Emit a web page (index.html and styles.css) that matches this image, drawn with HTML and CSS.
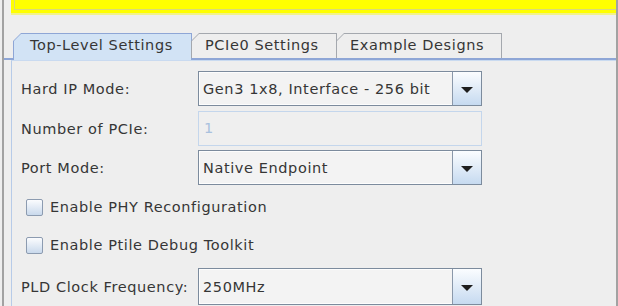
FILE: index.html
```html
<html>
<head>
    <link rel="stylesheet" href="styles.css">
</head>
<body>
    <div class="window">
        <div class="banner"><div class="bannerInner"></div></div>

        <div class="tabs">
            <div class="tab tabSelected" style="width:179px"><div class="tabFace">Top-Level Settings</div></div>
            <div class="tab" style="width:146px"><div class="tabFace">PCIe0 Settings</div></div>
            <div class="tab" style="width:166px"><div class="tabFace">Example Designs</div></div>
        </div>

        <div class="panel">
            <div class="row rowFirst">
                <span class="label">Hard IP Mode:</span>
                <div class="combo">
                    <span class="comboValue">Gen3 1x8, Interface - 256 bit</span>
                    <span class="comboArrow"><span class="triangle"></span></span>
                </div>
            </div>
            <div class="row rowField">
                <span class="label">Number of PCIe:</span>
                <div class="field disabled">1</div>
            </div>
            <div class="row rowPort">
                <span class="label">Port Mode:</span>
                <div class="combo">
                    <span class="comboValue">Native Endpoint</span>
                    <span class="comboArrow"><span class="triangle"></span></span>
                </div>
            </div>
            <div class="check checkFirst">
                <span class="box"></span>
                <span>Enable PHY Reconfiguration</span>
            </div>
            <div class="check checkSecond">
                <span class="box"></span>
                <span>Enable Ptile Debug Toolkit</span>
            </div>
            <div class="row rowClock">
                <span class="label">PLD Clock Frequency:</span>
                <div class="combo comboTall">
                    <span class="comboValue">250MHz</span>
                    <span class="comboArrow"><span class="triangle"></span></span>
                </div>
            </div>
        </div>
    </div>
</body>
</html>
```

FILE: styles.css
```css
body {
    margin: 0;
    background-color: #eeeeee;
    font-family: "DejaVu Sans", sans-serif;
    font-size: 14.5px;
    letter-spacing: 0.6px;
    color: #363636;
    overflow: hidden;
}

.window {
    margin-left: 2px;
    width: 612px;
    height: 306px;
    border-left: 2px solid #a2a2a2;
    border-right: 2px solid #a2a2a2;
}

/* yellow message strip, cut off by the top of the picture */
.banner {
    margin-left: 7px;
    height: 13px;
    background-color: #ffff00;
    border-bottom: 2px solid #f2f28a;
}

    .bannerInner {
        margin-left: 3px;
        height: 9px;
        border-left: 1px solid #d9d97a;
        border-bottom: 1px solid #d9d97a;
    }

/* tabs */
.tabs {
    display: flex;
    align-items: flex-end;
    margin-top: 18px;
    padding-left: 9px;
    height: 25px;
    border-bottom: 2px solid #8ea6d6;
}

.tab {
    box-sizing: border-box;
    height: 25px;
    padding: 1px 1px 0 1px;
    background-color: #a4a8ae;
    clip-path: polygon(8px 0, 100% 0, 100% 100%, 0 100%, 0 8px);
}

    .tab + .tab {
        margin-left: -1px;
    }

.tabFace {
    height: 100%;
    padding-left: 13px;
    line-height: 23px;
    background-color: #eeeeee;
    clip-path: polygon(7px 0, 100% 0, 100% 100%, 0 100%, 0 7px);
    white-space: nowrap;
}

.tabSelected {
    height: 27px;
    margin-bottom: -2px;
    padding-bottom: 0;
    background-color: #8ea6d6;
}

    .tabSelected .tabFace {
        padding-left: 16px;
        background-color: #d2e3f5;
        line-height: 23px;
    }

/* content panel */
.panel {
    margin-left: 7px;
    height: 245px;
    padding-top: 10px;
    padding-left: 9px;
    border-left: 1px solid #b7cbe8;
    border-top: 1px solid #c9daf0;
}

.row {
    display: flex;
    align-items: center;
}

.rowField {
    margin-top: 5px;
}

.rowPort {
    margin-top: 4px;
}

.rowClock {
    margin-top: 14px;
}

.label {
    width: 177px;
    flex-shrink: 0;
}

.combo {
    box-sizing: border-box;
    display: flex;
    width: 284px;
    height: 35px;
    border: 1px solid #7c8b9d;
    box-shadow: inset 0 0 0 1px #fdfdfd;
    background-color: #f3f3f3;
}

.comboTall {
    height: 37px;
}

.comboValue {
    flex: 1;
    padding-left: 4px;
    align-self: center;
    white-space: nowrap;
}

.comboArrow {
    display: flex;
    align-items: center;
    justify-content: center;
    width: 28px;
    border-left: 1px solid #8a98aa;
    background: linear-gradient(#fbfdff, #c6daf0);
}

.triangle {
    width: 0;
    height: 0;
    margin-top: 2px;
    border-left: 6px solid transparent;
    border-right: 6px solid transparent;
    border-top: 6px solid #1e1e1e;
}

.field {
    box-sizing: border-box;
    width: 284px;
    height: 35px;
    padding-left: 5px;
    line-height: 33px;
    border: 1px solid #c4d6ec;
}

    .field.disabled {
        color: #a9c1de;
        background-color: #efefef;
    }

.check {
    display: flex;
    align-items: center;
    padding-left: 5px;
    height: 18px;
}

.checkFirst {
    margin-top: 13px;
}

.checkSecond {
    margin-top: 20px;
}

.box {
    box-sizing: border-box;
    width: 17px;
    height: 17px;
    margin-right: 7px;
    border: 1px solid #8c9bb0;
    border-radius: 2px;
    background: linear-gradient(#fbfcfe, #c9d9ec);
}
```
